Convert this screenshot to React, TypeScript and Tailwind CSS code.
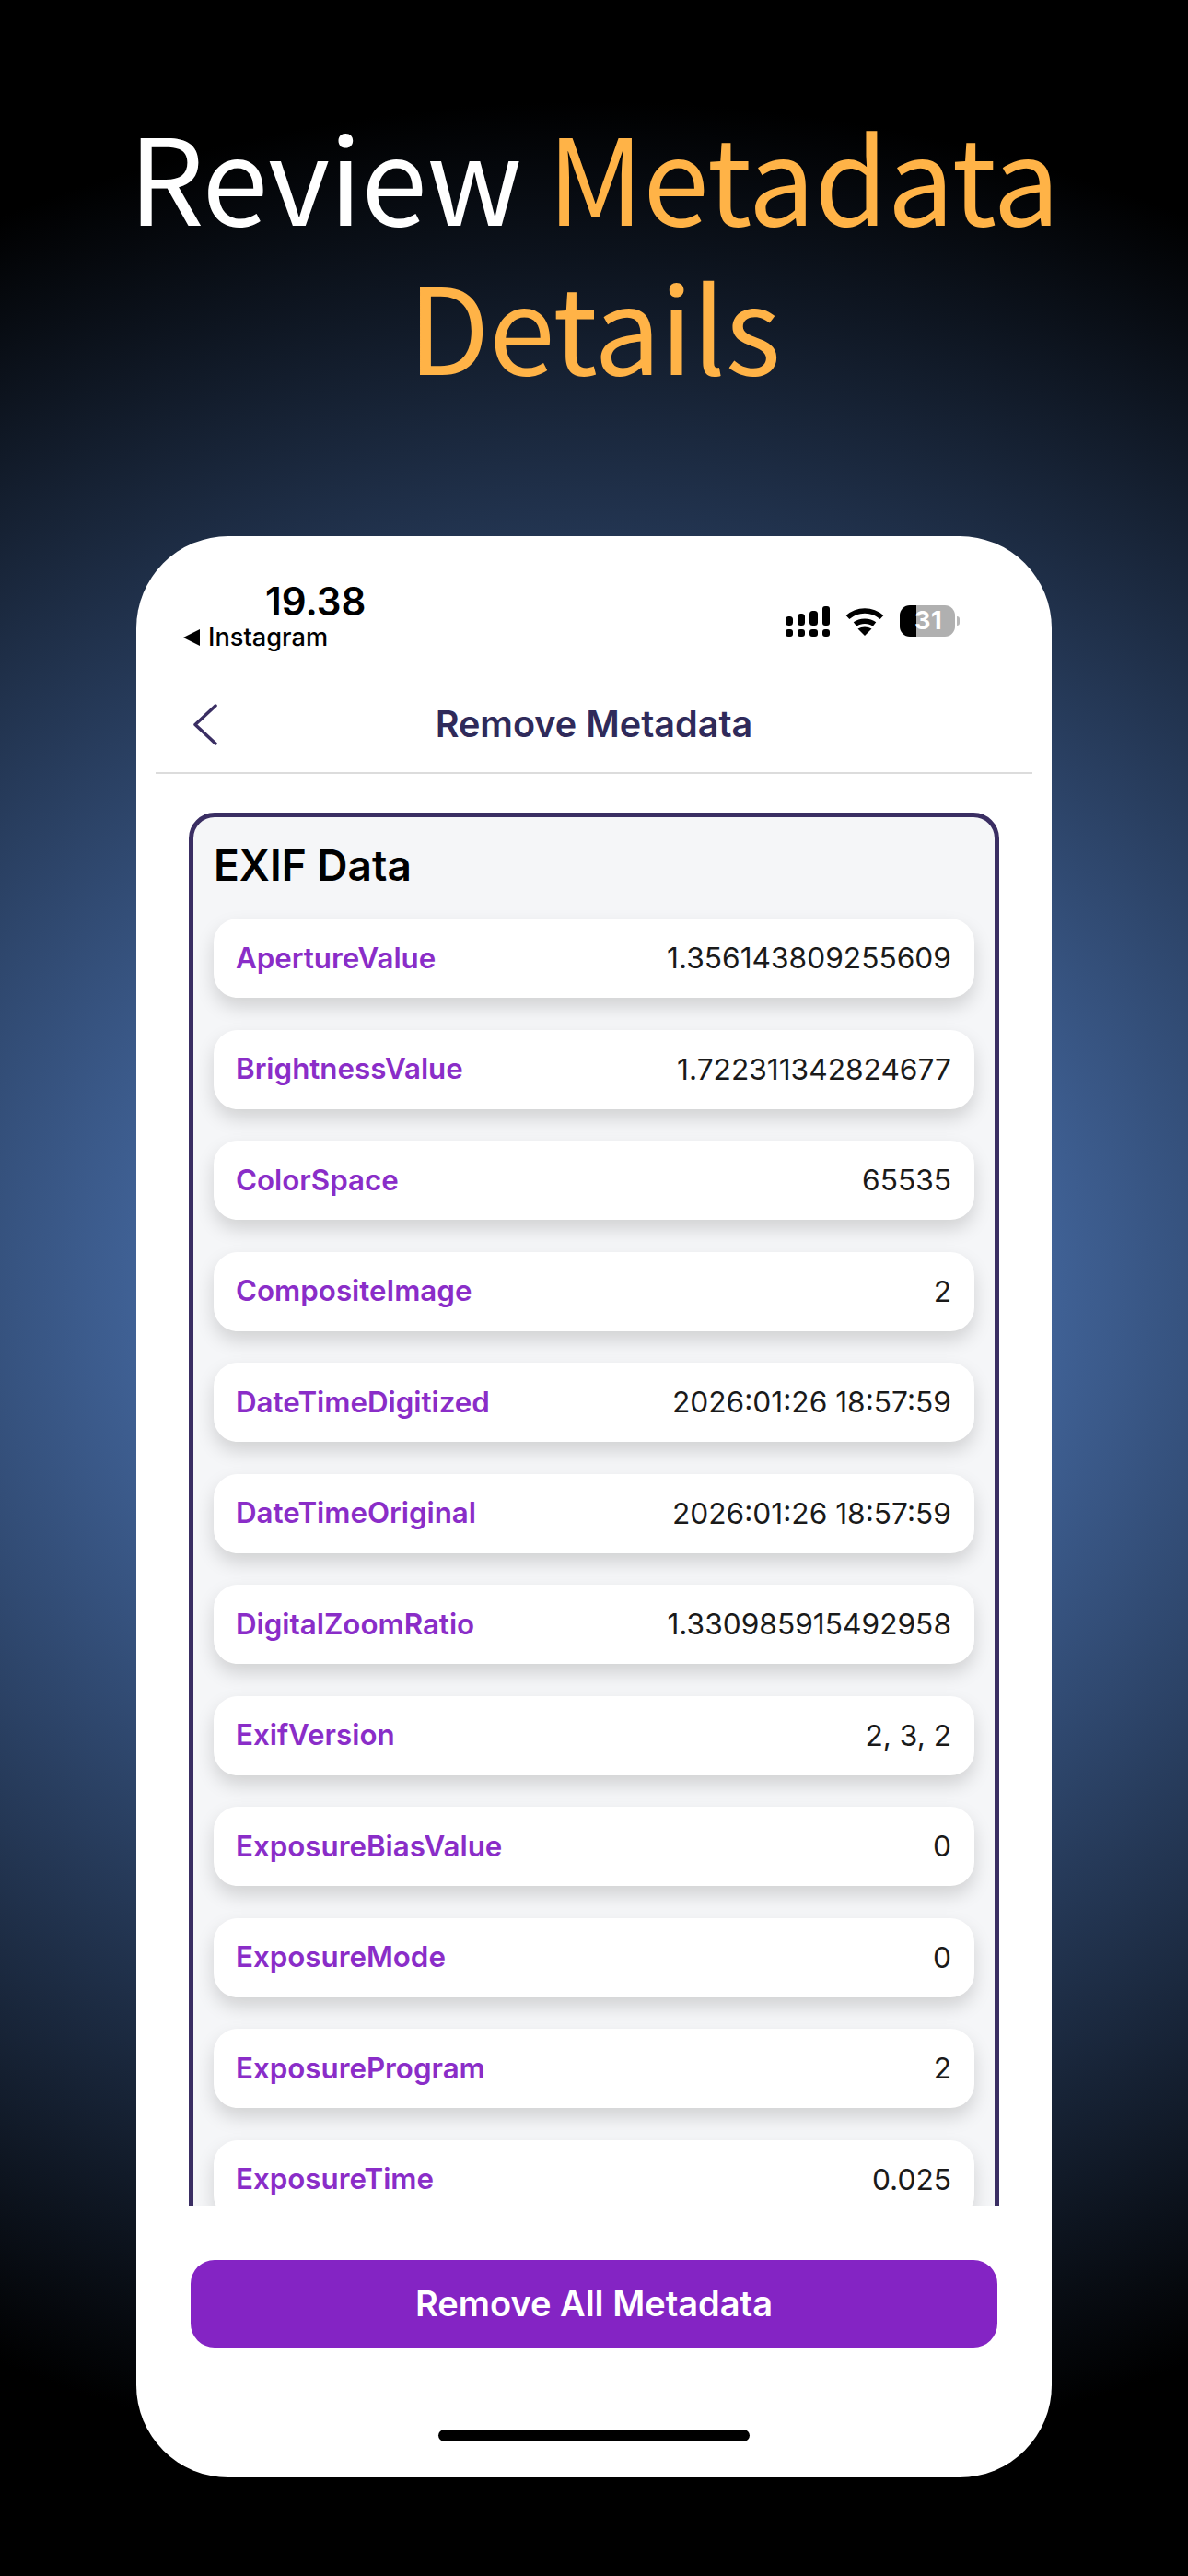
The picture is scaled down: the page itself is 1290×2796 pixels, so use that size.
import React from "react";

const rows: [string, string][] = [
  ["ApertureValue", "1.356143809255609"],
  ["BrightnessValue", "1.722311342824677"],
  ["ColorSpace", "65535"],
  ["CompositeImage", "2"],
  ["DateTimeDigitized", "2026:01:26 18:57:59"],
  ["DateTimeOriginal", "2026:01:26 18:57:59"],
  ["DigitalZoomRatio", "1.330985915492958"],
  ["ExifVersion", "2, 3, 2"],
  ["ExposureBiasValue", "0"],
  ["ExposureMode", "0"],
  ["ExposureProgram", "2"],
  ["ExposureTime", "0.025"],
];

function Signal() {
  return (
    <svg width="48" height="33" viewBox="0 0 48 33" fill="#000">
      <rect x="0" y="11" width="8" height="10" rx="3.5" />
      <rect x="13" y="8" width="8" height="13" rx="3.5" />
      <rect x="26" y="5" width="9" height="16" rx="3.5" />
      <rect x="40" y="0" width="8" height="21" rx="3" />
      <rect x="0" y="25" width="8" height="8" rx="3" />
      <rect x="13" y="25" width="8" height="8" rx="3" />
      <rect x="26" y="25" width="9" height="8" rx="3" />
      <rect x="40" y="25" width="8" height="8" rx="3" />
    </svg>
  );
}

function Wifi() {
  return (
    <svg width="42" height="31" viewBox="0 0 42 31" fill="none" stroke="#000" strokeWidth="5.5" strokeLinejoin="round">
      <path d="M2.5 11 C13 1.5 29 1.5 39.5 11" />
      <path d="M10.5 18.5 C16 14 26 14 31.5 18.5" />
      <path d="M21 31 L13.5 23.5 C18 20.8 24 20.8 28.5 23.5 Z" fill="#000" stroke="none" />
    </svg>
  );
}

function Battery() {
  return (
    <div className="relative flex h-[34px] w-[66px] items-center">
      <div className="h-[34px] w-[18px] rounded-l-[11px] bg-black" />
      <div className="h-[34px] w-[42px] rounded-r-[11px] bg-[#b0b0b0]" />
      <div className="ml-[2px] h-[10px] w-[3px] rounded-r-[3px] bg-[#b8b8b8]" />
      <span className="absolute left-[16px] top-0 text-[27px] leading-[34px] font-bold tracking-[0.5px] text-white">31</span>
    </div>
  );
}

export default function App() {
  return (
    <div className="flex h-[2796px] w-[1290px] flex-col items-center overflow-hidden bg-[radial-gradient(ellipse_1500px_1290px_at_50%_1400px,#5f91df_0%,#000_100%)] font-['Inter',sans-serif]">
      <h1 className="mt-[108px] h-[324px] w-full text-center font-['Noto_Sans_CJK_SC',sans-serif] text-[129px] leading-[162px] font-normal tracking-[-0.75px] text-white">
        Review <span className="text-[#ffb347]">Metadata</span>
        <br />
        <span className="text-[#ffb347]">Details</span>
      </h1>
      <div className="mt-[150px] flex h-[2107px] w-[994px] flex-col overflow-hidden rounded-[100px] bg-white">
        <div className="flex h-[132px] shrink-0 items-start justify-between pr-[99px] pl-[51px]">
          <div className="flex flex-col pt-[47px]">
            <span className="pl-[89px] text-[42px] leading-[48px] font-semibold text-black">19.38</span>
            <div className="flex items-center gap-[9px]">
              <svg width="18" height="18" viewBox="0 0 18 18" fill="#000">
                <path d="M0 9 L18 0 V18 Z" />
              </svg>
              <span className="text-[27.2px] leading-[29px] font-medium text-black">Instagram</span>
            </div>
          </div>
          <div className="flex items-center gap-[17px] pt-[75px]">
            <Signal />
            <Wifi />
            <Battery />
          </div>
        </div>
        <div className="mx-[21px] flex h-[126px] shrink-0 items-center border-b-2 border-[#dcdcdc] pt-[20px]">
          <div className="w-[60px] pl-[40px]">
            <svg width="27" height="45" viewBox="0 0 27 45" fill="none" stroke="#3a2e63" strokeWidth="3.5" strokeLinecap="round" strokeLinejoin="round">
              <path d="M25 2 L3 22.5 L25 43" />
            </svg>
          </div>
          <div className="flex-1 text-center text-[39.6px] leading-[46px] font-semibold text-[#2f2a5a]">Remove Metadata</div>
          <div className="w-[60px]" />
        </div>
        <div className="min-h-0 flex-1 overflow-hidden px-[57px] pt-[42px]">
          <div className="rounded-[28px] border-[5px] border-[#3a2e63] bg-[#f5f6f8] px-[22px] pt-[23px] pb-[40px]">
            <h2 className="mb-[29px] text-[46px] leading-[58px] font-semibold text-black">EXIF Data</h2>
            <div className="flex flex-col gap-[34.5px]">
              {rows.map(([k, v]) => (
                <div
                  key={k}
                  className="flex h-[86px] items-center justify-between rounded-[26px] bg-white pr-[25px] pl-[24px] shadow-[0_10px_20px_rgba(0,0,0,0.15)]"
                >
                  <span className="text-[31.3px] font-semibold text-[#8a2dc8]">{k}</span>
                  <span className="text-[31.7px] text-[#1a1a1a]">{v}</span>
                </div>
              ))}
            </div>
          </div>
        </div>
        <div className="h-[295px] shrink-0 px-[59px] pt-[59px]">
          <div className="flex h-[95px] items-center justify-center rounded-[26px] bg-[#8424c4] text-[38px] font-semibold text-white">
            Remove All Metadata
          </div>
          <div className="mx-auto mt-[89px] h-[13px] w-[338px] rounded-full bg-black" />
        </div>
      </div>
    </div>
  );
}
